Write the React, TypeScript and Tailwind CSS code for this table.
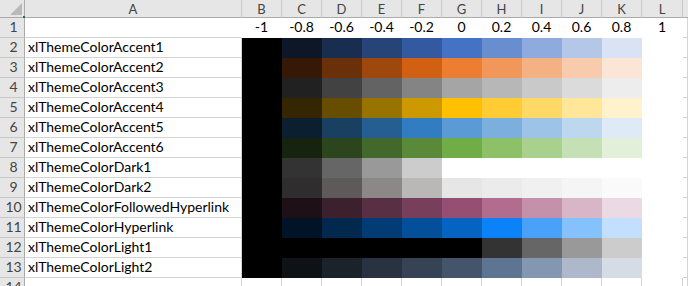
import React from "react";

const COLUMNS = ["A", "B", "C", "D", "E", "F", "G", "H", "I", "J", "K", "L"];
const TINTS = [-1, -0.8, -0.6, -0.4, -0.2, 0, 0.2, 0.4, 0.6, 0.8, 1];

// Excel swaps Dark1/Light1 and Dark2/Light2 when these are applied from VBA
const THEME_ROWS = [
  { name: "xlThemeColorAccent1", base: "#4472C4" },
  { name: "xlThemeColorAccent2", base: "#ED7D31" },
  { name: "xlThemeColorAccent3", base: "#A5A5A5" },
  { name: "xlThemeColorAccent4", base: "#FFC000" },
  { name: "xlThemeColorAccent5", base: "#5B9BD5" },
  { name: "xlThemeColorAccent6", base: "#70AD47" },
  { name: "xlThemeColorDark1", base: "#FFFFFF" },
  { name: "xlThemeColorDark2", base: "#E7E6E6" },
  { name: "xlThemeColorFollowedHyperlink", base: "#954F72" },
  { name: "xlThemeColorHyperlink", base: "#0563C1" },
  { name: "xlThemeColorLight1", base: "#000000" },
  { name: "xlThemeColorLight2", base: "#44546A" },
];

const FONT = { fontFamily: "Lato, 'Open Sans', sans-serif" };

// TintAndShade works on HSL luminance, not on the raw RGB channels
function tintAndShade(hex: string, t: number) {
  const r = parseInt(hex.slice(1, 3), 16) / 255;
  const g = parseInt(hex.slice(3, 5), 16) / 255;
  const b = parseInt(hex.slice(5, 7), 16) / 255;
  const max = Math.max(r, g, b);
  const min = Math.min(r, g, b);
  let h = 0;
  let s = 0;
  let l = (max + min) / 2;
  const d = max - min;
  if (d > 0) {
    s = l > 0.5 ? d / (2 - max - min) : d / (max + min);
    if (max === r) h = ((g - b) / d + (g < b ? 6 : 0)) / 6;
    else if (max === g) h = ((b - r) / d + 2) / 6;
    else h = ((r - g) / d + 4) / 6;
  }
  l = t < 0 ? l * (1 + t) : l + (1 - l) * t;

  const q = l < 0.5 ? l * (1 + s) : l + s - l * s;
  const p = 2 * l - q;
  const hue = (x: number) => {
    if (x < 0) x += 1;
    if (x > 1) x -= 1;
    if (x < 1 / 6) return p + (q - p) * 6 * x;
    if (x < 1 / 2) return q;
    if (x < 2 / 3) return p + (q - p) * (2 / 3 - x) * 6;
    return p;
  };
  const to = (v: number) => Math.round(v * 255);
  return `rgb(${to(hue(h + 1 / 3))}, ${to(hue(h))}, ${to(hue(h - 1 / 3))})`;
}

function RowHeader({ n }: { n: number }) {
  return (
    <div className="box-border flex h-[20px] items-end justify-center border-r border-b border-r-[#ababab] border-b-[#c8c8c8] bg-[#e6e6e6] pb-[2px] pl-[3px] text-[14px] leading-[16px] text-[#444]">
      {n}
    </div>
  );
}

function Cell({ fill, children, className = "" }: { fill?: string; children?: React.ReactNode; className?: string }) {
  return (
    <div
      className={`box-border flex h-[20px] items-end overflow-hidden whitespace-nowrap border-r border-b border-[#d4d4d4] pb-[2px] text-[14px] leading-[16px] text-black ${className}`}
      style={fill ? { backgroundColor: fill, borderColor: fill } : undefined}
    >
      {children}
    </div>
  );
}

export default function App() {
  return (
    <div className="h-[286px] w-[688px] overflow-hidden bg-white" style={FONT}>
      <div className="grid grid-cols-[25px_217px_repeat(10,40px)_41px_1fr]">
        {/* column headers */}
        <div className="relative box-border h-[18px] border-r border-b border-r-[#ababab] border-b-[#ababab] bg-[#e6e6e6]">
          <svg className="absolute top-[3px] left-[10px]" width="12" height="12" viewBox="0 0 12 12">
            <polygon points="12,0 12,12 0,12" fill="#b9b9b9" />
          </svg>
          <div className="absolute right-[-1px] bottom-[-1px] h-[2px] w-[2px] bg-[#217346]" />
        </div>
        {COLUMNS.map((col) => (
          <div
            key={col}
            className="box-border flex h-[18px] items-center justify-center border-r border-b border-r-[#c8c8c8] border-b-[#ababab] bg-[#e6e6e6] text-[13px] leading-[16px] text-[#444]"
          >
            {col}
          </div>
        ))}
        <div className="box-border h-[18px] border-b border-b-[#ababab] bg-[#e6e6e6]" />

        {/* row 1: tint values */}
        <RowHeader n={1} />
        <Cell className="[border-right-color:#fff]" />
        {TINTS.map((t) => (
          <Cell key={t} fill="#ffffff" className="justify-center">
            {t}
          </Cell>
        ))}
        <Cell />

        {/* rows 2-13: theme colours */}
        {THEME_ROWS.map((row, i) => (
          <React.Fragment key={row.name}>
            <RowHeader n={i + 2} />
            <Cell className="pl-[3px]">{row.name}</Cell>
            {TINTS.map((t) => (
              <Cell key={t} fill={tintAndShade(row.base, t)} />
            ))}
            <Cell />
          </React.Fragment>
        ))}

        {/* row 14, cut off by the window */}
        <RowHeader n={14} />
        {COLUMNS.map((col) => (
          <Cell key={col} />
        ))}
        <Cell />
      </div>
    </div>
  );
}
